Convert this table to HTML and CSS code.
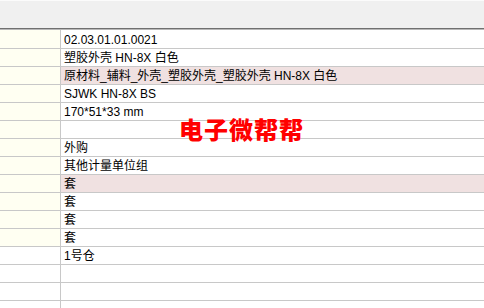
FILE: index.html
```html
<!DOCTYPE html>
<html>
<head>
<meta charset="utf-8">
<link rel="stylesheet" href="styles.css">
</head>
<body>
<div class="sheet">
  <div class="header"></div>
  <div class="grid">
    <div class="row first"><div class="lab"></div><div class="val">02.03.01.01.0021</div></div>
    <div class="row"><div class="lab"></div><div class="val">塑胶外壳 HN-8X 白色</div></div>
    <div class="row pink"><div class="lab"></div><div class="val">原材料_辅料_外壳_塑胶外壳_塑胶外壳 HN-8X 白色</div></div>
    <div class="row"><div class="lab"></div><div class="val">SJWK HN-8X BS</div></div>
    <div class="row"><div class="lab"></div><div class="val">170*51*33 mm</div></div>
    <div class="row"><div class="lab"></div><div class="val"></div></div>
    <div class="row"><div class="lab"></div><div class="val">外购</div></div>
    <div class="row"><div class="lab"></div><div class="val">其他计量单位组</div></div>
    <div class="row pink"><div class="lab"></div><div class="val">套</div></div>
    <div class="row"><div class="lab"></div><div class="val">套</div></div>
    <div class="row"><div class="lab"></div><div class="val">套</div></div>
    <div class="row"><div class="lab"></div><div class="val">套</div></div>
    <div class="row plain"><div class="lab"></div><div class="val">1号仓</div></div>
    <div class="row plain"><div class="lab"></div><div class="val"></div></div>
    <div class="row plain"><div class="lab"></div><div class="val"></div></div>
    <div class="row plain"><div class="lab"></div><div class="val"></div></div>
  </div>
  <div class="watermark">电子微帮帮</div>
</div>
</body>
</html>
```

FILE: styles.css
```css
html, body {
  margin: 0;
  padding: 0;
  background: #ffffff;
  overflow: hidden;
}
.sheet {
  position: relative;
  width: 484px;
  height: 308px;
  overflow: hidden;
  font-family: "Liberation Sans", "Noto Sans CJK SC", sans-serif;
  font-size: 12px;
  color: #000;
}
.header {
  height: 27px;
  background: #f0f0f0;
  border-top: 1px solid #fbfbfb;
  border-bottom: 1px solid #707070;
  box-shadow: 0 1px 0 #b8b8b8;
  margin-bottom: 1px;
}
.grid {
  display: flex;
  flex-direction: column;
}
.row {
  display: flex;
  height: 17px;
  border-bottom: 1px solid #c8c8c8;
}
.row.first {
  height: 18px;
}
.lab {
  width: 60px;
  flex: none;
  background: #fffff2;
  border-right: 1px solid #c8c8c8;
}
.row.plain .lab {
  background: #ffffff;
}
.val {
  flex: 1;
  padding-left: 3px;
  padding-top: 1px;
  line-height: 17px;
  white-space: nowrap;
  background: #ffffff;
}
.row.first .val {
  padding-top: 2px;
}
.row.pink .val {
  background: #f0e1e1;
}
.watermark {
  position: absolute;
  left: 179px;
  top: 114px;
  font-family: "Noto Sans CJK SC", sans-serif;
  font-weight: 900;
  font-size: 24px;
  line-height: 30px;
  color: #ff0000;
  letter-spacing: 1px;
}
```
